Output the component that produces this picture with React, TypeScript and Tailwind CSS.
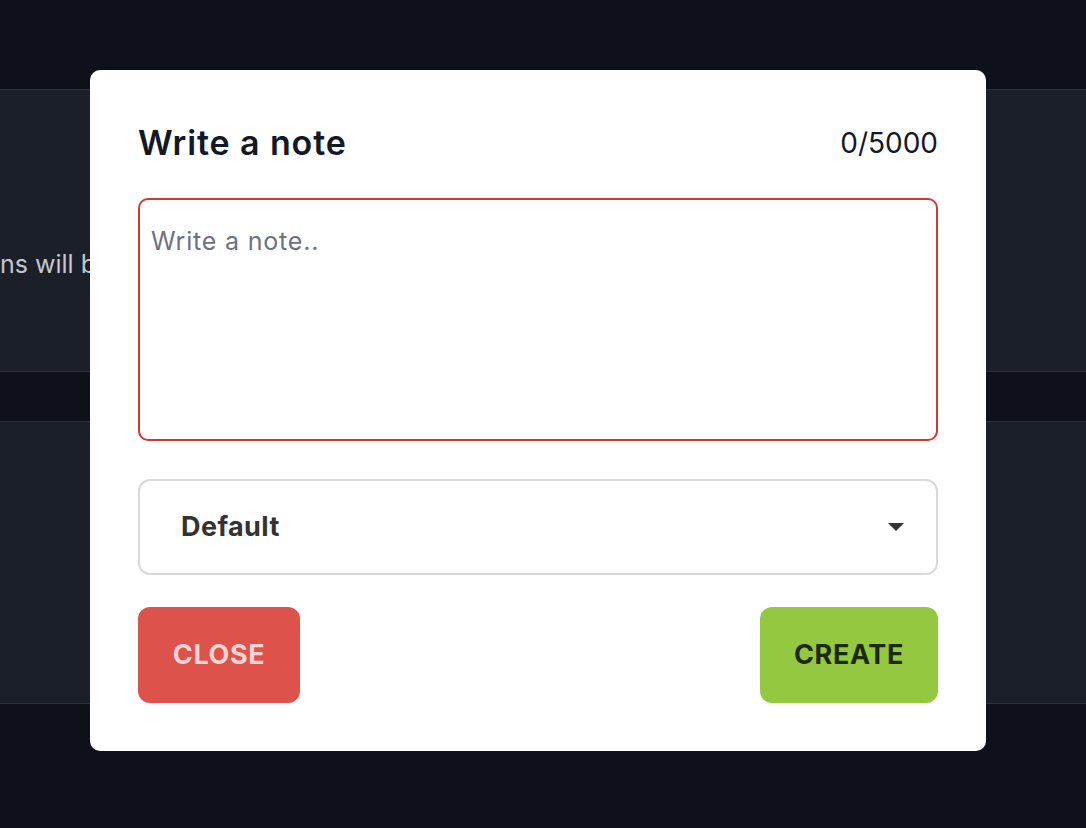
import { useState } from "react";

function NoteModal() {
  const [text, setText] = useState("");

  return (
    <div className="absolute left-[90px] top-[70px] w-[896px] rounded-[10px] bg-white px-12 pb-12 pt-[52px]">
      {/* Header */}
      <div className="flex items-center justify-between">
        <h2 className="text-[34px] font-semibold leading-[42px] tracking-[0.9px] text-[#111827]">Write a note</h2>
        <span className="text-[28px] leading-[36px] text-[#111827]">{text.length}/5000</span>
      </div>

      {/* Textarea */}
      <textarea
        value={text}
        onChange={(e) => setText(e.target.value)}
        placeholder="Write a note.."
        className="mt-[34px] block h-[243px] w-full resize-none rounded-[10px] border-2 border-[#cb3b33] px-[11px] pb-[20px] pt-[24px] text-[25px] leading-[34px] tracking-[0.8px] text-[#111827] outline-none placeholder:text-[#6b7280]"
      />

      {/* Select */}
      <div className="mt-[38px] flex h-[96px] items-center justify-between rounded-[12px] border-2 border-[#d9d9d9] pl-[41px] pr-[32px]">
        <span className="text-[27px] font-bold tracking-[0.4px] text-[#333333]">Default</span>
        <svg width="16" height="8" viewBox="0 0 16 8">
          <path d="M0 0h16L8 8z" fill="#333333" />
        </svg>
      </div>

      {/* Actions */}
      <div className="mt-[32px] flex items-center justify-between">
        <button className="h-[96px] w-[162px] rounded-[12px] bg-[#de524c] text-[27px] font-bold tracking-[0.6px] text-[#fbd4d2]">
          CLOSE
        </button>
        <button className="h-[96px] w-[178px] rounded-[12px] bg-[#94c840] text-[27px] font-bold tracking-[0.6px] text-[#1c2a0b]">
          CREATE
        </button>
      </div>
    </div>
  );
}

export default function App() {
  return (
    <div className="relative h-[828px] w-[1086px] overflow-hidden bg-[#0e111a] font-['Inter',sans-serif]">
      <div className="flex flex-col gap-[49px] pt-[89px]">
        <div className="flex h-[283px] items-center border-y border-[#2c313b] bg-[#1b1f28]">
          <p className="whitespace-nowrap pt-[68px] text-[25px] text-[#c4c7cd]">ns will be shown here once you add some</p>
        </div>
        <div className="h-[283px] border-y border-[#2c313b] bg-[#1b1f28]" />
      </div>
      <NoteModal />
    </div>
  );
}
